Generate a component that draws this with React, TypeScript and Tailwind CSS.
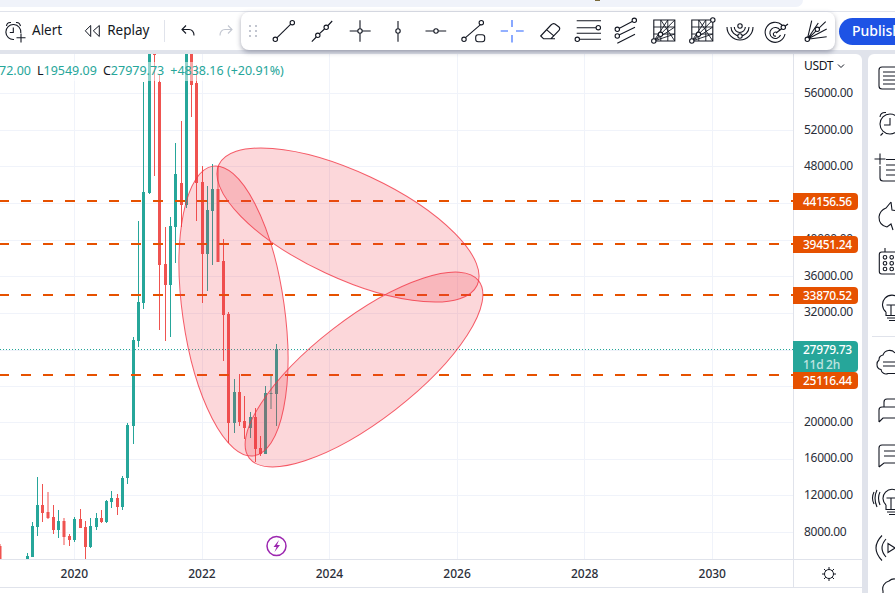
import React from "react";

type C = [number, number, number, number, number, "g" | "r"];
const candles: C[] = [
  [0, 544, 560, 546, 560, "r"],
  [27.5, 553, 560, 556, 560, "g"],
  [32.5, 522, 557, 526, 557, "g"],
  [37.5, 477, 536, 505, 527, "g"],
  [42.5, 484, 522, 505, 513, "r"],
  [48, 492, 519, 512, 518, "r"],
  [53.5, 505, 534, 517, 530, "r"],
  [58.5, 510, 538, 521, 530, "g"],
  [64, 518, 545, 521, 537, "r"],
  [69.5, 534, 546, 536, 540, "r"],
  [74.5, 517, 542, 519, 540, "g"],
  [80.5, 509, 528, 519, 528, "r"],
  [85.5, 521, 559, 527, 547, "r"],
  [90.5, 518, 548, 526, 547, "g"],
  [96.5, 513, 530, 518, 527, "g"],
  [101.5, 510, 523, 518, 522, "r"],
  [106.5, 500, 523, 501, 522, "g"],
  [111.5, 491, 508, 498, 502, "g"],
  [117.5, 494, 515, 498, 507, "r"],
  [122.5, 476, 510, 478, 507, "g"],
  [127.5, 423, 484, 425, 478, "g"],
  [133.5, 337, 444, 340, 426, "g"],
  [138.5, 221, 347, 302, 341, "g"],
  [143.5, 82, 309, 192, 303, "g"],
  [149.5, 54, 194, 54, 193, "g"],
  [154.5, 54, 176, 54, 55, "r"],
  [159.5, 74, 330, 82, 265, "r"],
  [165.5, 227, 341, 264, 285, "r"],
  [170.5, 217, 337, 226, 285, "g"],
  [175.5, 143, 263, 174, 227, "g"],
  [181.5, 121, 227, 183, 205, "r"],
  [186.5, 54, 208, 54, 205, "g"],
  [191.5, 54, 117, 54, 85, "r"],
  [196.5, 65, 221, 83, 183, "r"],
  [202.5, 166, 303, 182, 254, "r"],
  [207.5, 186, 291, 210, 254, "g"],
  [212.5, 164, 265, 189, 211, "g"],
  [218, 166, 262, 189, 262, "r"],
  [223.5, 239, 361, 261, 315, "r"],
  [228.5, 312, 443, 314, 423, "r"],
  [234.5, 379, 433, 392, 423, "g"],
  [239.5, 374, 426, 392, 422, "r"],
  [244.5, 396, 439, 421, 428, "r"],
  [250.5, 412, 438, 417, 428, "g"],
  [255.5, 408, 462, 417, 449, "r"],
  [260.5, 436, 456, 448, 454, "r"],
  [265.5, 386, 454, 393, 454, "g"],
  [271, 374, 409, 393, 394, "g"],
  [276.5, 344, 426, 349, 394, "g"],
];

const GREEN = "#26a69a";
const RED = "#ef5350";
const ORANGE = "#e65100";
const prices = ["56000.00", "52000.00", "48000.00", "44000.00", "40000.00", "36000.00", "32000.00", "28000.00", "24000.00", "20000.00", "16000.00", "12000.00", "8000.00"];
const gridY = [93, 130, 166, 203, 240, 276, 313, 350, 386, 422, 459, 495, 532];
const gridX = [74.5, 202.5, 329.5, 457.5, 584.5, 712.5];
const years = ["2020", "2022", "2024", "2026", "2028", "2030"];
const orangeBadges: [string, string][] = [
  ["44156.56", "top-[139px]"],
  ["39451.24", "top-[182px]"],
  ["33870.52", "top-[233px]"],
];

function Ic({ children }: { children: React.ReactNode }) {
  return (
    <div className="w-[38px] h-[28px] flex justify-center shrink-0">
      <svg width={28} height={28} viewBox="0 0 28 28" fill="none" stroke="#131722" strokeWidth={1.1} className="overflow-visible">
        {children}
      </svg>
    </div>
  );
}
const Dot = ({ x, y }: { x: number; y: number }) => <circle cx={x} cy={y} r={2.2} fill="white" stroke="#131722" />;

function Mesh({ knob }: { knob?: boolean }) {
  return (
    <Ic>
      <path d="M3.800 3h21v21h-21z" />
      <path d="M3.800 10h21M3.800 17h21M10.800 3v21M17.800 3v21M3.800 24L24.800 3M3.800 24L17.800 3M3.800 24L24.800 10M3.800 24L24.800 17M10.800 3L24.800 24" strokeWidth={0.9} />
      <Dot x={3.8} y={24} />
      <Dot x={10.5} y={17.3} />
      {knob && <Dot x={24.8} y={3} />}
    </Ic>
  );
}

function Toolbar() {
  return (
    <div className="flex items-center w-[594px] h-[38px] shrink-0 bg-white rounded-lg shadow-[0_2px_5px_rgba(60,64,90,0.45)] pl-[6px] relative z-20">
      <svg width={14} height={14} className="shrink-0 mr-[4px]" fill="#c2c6d0">
        <rect x="2" y="1" width="2" height="2" /><rect x="8" y="1" width="2" height="2" />
        <rect x="2" y="6" width="2" height="2" /><rect x="8" y="6" width="2" height="2" />
        <rect x="2" y="11" width="2" height="2" /><rect x="8" y="11" width="2" height="2" />
      </svg>
      <Ic><path d="M6.800 20.800L20.800 7.200" /><Dot x={5.3} y={22.3} /><Dot x={22.3} y={5.7} /></Ic>
      <Ic><path d="M3.800 24.700L8.300 20M11.500 16.700L16.500 12M20 8.500L24.200 4" /><Dot x={9.8} y={18.3} /><Dot x={18.2} y={10.3} /></Ic>
      <Ic><path d="M3.700 14H11.800M16.200 14H24.700M14 3.300V11.800M14 16.200V24.700" /><Dot x={14} y={14} /></Ic>
      <Ic><path d="M14 4V11.800M14 16.200V24.700" /><Dot x={14} y={14} /></Ic>
      <Ic><path d="M3.500 14H11.800M16.200 14H24.200" /><Dot x={14} y={14} /></Ic>
      <Ic><path d="M5.500 20.700L20.800 7.300" /><Dot x={4} y={22.3} /><Dot x={21.3} y={5.7} /><rect x="15.700" y="17.700" width="9" height="7" rx="2.500" /></Ic>
      <Ic><path d="M14 3V10M14 18V25.500M2.700 14H10M18 14H25.700" stroke="#2962ff" /></Ic>
      <Ic>
        <path d="M4.700 19L15 8q2-2 4-1l4 3q1.500 1.500 0 3.500L15 21.700H7.500zM10.500 12.700l7 6M7.500 21.700H19" />
      </Ic>
      <Ic>
        <path d="M2.700 3.700H27M2.700 10.700H22M2.700 16.300H27M5.500 22.300H27" />
        <Dot x={24.3} y={10.7} /><Dot x={3.3} y={22.3} />
      </Ic>
      <Ic>
        <path d="M7 11.400L20.200 4.400M7 18L23 10.300M5.300 26.300L23 17.300" />
        <Dot x={5.3} y={12.3} /><Dot x={22.3} y={3.3} /><Dot x={5.3} y={19} />
      </Ic>
      <Mesh />
      <Mesh knob />
      <Ic>
        <path d="M1 10A13 13 0 0 0 27 10M5 10A9 9 0 0 0 23 10M8.300 10A5.500 5.500 0 0 0 19.300 10" />
        <Dot x={14} y={9} /><Dot x={14} y={19} />
      </Ic>
      <Ic>
        <path d="M18 8A10 10 0 1 0 21 17M16 13A5.500 5.500 0 1 0 16.500 18M13 16A2 2 0 1 0 12 19" />
        <path d="M12 16L24 7" /><Dot x={19.3} y={10.3} />
      </Ic>
      <Ic>
        <path d="M5.300 22.300L9.700 3.700M5.300 22.300L16.300 6M5.300 22.300L23.700 4.700M5.300 22.300L24.700 12M5.300 22.300L24.700 19.700" />
        <Dot x={5.3} y={22.3} /><Dot x={15.3} y={12.3} />
      </Ic>
    </div>
  );
}

function Side({ children }: { children: React.ReactNode }) {
  return (
    <svg width={27} height={46} viewBox="0 0 27 46" fill="none" stroke="#131722" strokeWidth={1.1} className="shrink-0 block">
      {children}
    </svg>
  );
}

function Sidebar() {
  return (
    <div className="w-[27px] bg-white rounded-tl-md flex flex-col overflow-hidden pt-px shrink-0">
      <Side><path d="M30 12H14a3 3 0 0 0-3 3v16a3 3 0 0 0 3 3H30M15 17H30M15 21H30M15 25H30M15 29H30" /></Side>
      <Side>
        <circle cx="22" cy="23" r="10" />
        <path d="M22 17V24H16M12 16Q12.500 11 18 11.500M15 32l-2.500 2.500" />
      </Side>
      <Side><path d="M12 19V31a3 3 0 0 0 3 3H30M18 12.500H30M18 18H30M18 23H30M18 28H30M12 6.500V17.500M6.500 12H17.500" /></Side>
      <Side><path d="M23 9L18 15A11 11 0 0 0 11 24C11 29 14 33 19 34L23 31L25 37M23 9L24 17L30 18" /></Side>
      <Side>
        <rect x="11.300" y="13" width="24" height="22" rx="2.500" />
        <path d="M17 9V13" />
        <circle cx="17" cy="18.300" r="1.800" /><circle cx="23.700" cy="18.300" r="1.800" />
        <circle cx="17" cy="24.300" r="1.800" /><circle cx="23.700" cy="24.300" r="1.800" />
        <circle cx="17" cy="30" r="1.800" /><circle cx="23.700" cy="30" r="1.800" />
      </Side>
      <Side>
        <path d="M18 27A9.500 9.500 0 1 1 30 27M18 27v3.500H30M19 33H30M21 35.500H30M23 20V30.500M18.500 20H28" />
      </Side>
      <div className="h-px w-full bg-[#e0e3eb] mt-[5px] ml-[4px] shrink-0" />
      <div className="mt-[4px]">
        <Side>
          <path d="M27 12a7 7 0 0 0-12 2 5 5 0 0 0-4 5 5.500 5.500 0 0 0-2 4.500 5 5 0 0 0 4 5 5 5 0 0 0 7 4H30M15 21H30M15 25H30" />
        </Side>
        <Side><path d="M16 20V15a3 3 0 0 1 3-3H30M11 35V23a3 3 0 0 1 3-3H30M11 35l4-4H30" /></Side>
        <Side><path d="M11 34V15a3 3 0 0 1 3-3H30M11 34l5-4H30M16 18H30M16 23H28" /></Side>
        <Side>
          <path d="M18 26A9 9 0 1 1 30 26M18 26v4.500H30M19 33H30M21 35.500H30M23 19V30.500M18.500 19H28" />
          <path d="M12 13Q9 19 12 26M9 11Q5 19 9 28M6 13Q3 19 6 25" />
        </Side>
        <Side>
          <path d="M14 10.500Q2 23 14 35.500M18 14Q10 23 18 32M20 18.500V27.500L27 23Z" />
        </Side>
        <Side><path d="M15 40V20a8 8 0 0 1 6-10 8 8 0 0 1 9-1" /></Side>
      </div>
    </div>
  );
}

export default function App() {
  return (
    <div className="w-[895px] h-[593px] overflow-hidden bg-[#e0e3eb] flex flex-col [font-family:'Noto_Sans',sans-serif] text-[#131722]">
      {/* browser strip */}
      <div className="h-[12px] bg-white shrink-0 flex flex-col relative">
        <div className="h-[7px] w-[803px] bg-[#f0f3fa] rounded-br-lg" />
        <div className="absolute left-[595px] top-0 w-[5px] h-px bg-[#7a6a3a]" />
        <div className="flex-1" />
        <div className="h-px bg-[#e0e3eb]" />
      </div>

      {/* top toolbar */}
      <div className="h-[38px] shrink-0 bg-white flex items-center relative">
        <div className="flex items-center h-full w-[241px] shrink-0">
          <svg width={22} height={22} viewBox="0 0 22 22" fill="none" stroke="#131722" strokeWidth={1.1} className="ml-[5px] shrink-0 overflow-visible">
            <path d="M15.800 13A7.500 7.500 0 1 0 9 19.500M8.300 7.500v5H4.800M1.500 6Q2 2 6 2.500M11 2.500Q14.500 2 15.500 6" />
            <path d="M16 13.500v9M11.500 17.700h9" />
          </svg>
          <span className="text-[13.5px] ml-[5px] leading-none">Alert</span>
          <svg width={18} height={16} viewBox="0 0 18 16" fill="none" stroke="#131722" strokeWidth={1} className="ml-[22px] shrink-0">
            <path d="M6.700 2.500L1.300 7.800 6.700 13.500zM15.300 2.500L9.300 7.800 15.300 13.500z" />
          </svg>
          <span className="text-[13.5px] ml-[5px] leading-none">Replay</span>
          <div className="w-px h-[22px] bg-[#e0e3eb] ml-[15px]" />
          <svg width={16} height={14} viewBox="0 0 16 14" fill="none" stroke="#131722" strokeWidth={1.1} className="ml-[15px] shrink-0">
            <path d="M6 1.500L2 5.500l4 4M2 5.500h7c3 0 5 2.500 5 6" />
          </svg>
          <svg width={16} height={14} viewBox="0 0 16 14" fill="none" stroke="#c2c6d0" strokeWidth={1.1} className="ml-[22px] shrink-0">
            <path d="M10 1.500l4 4-4 4M14 5.500H7c-3 0-5 2.500-5 6" />
          </svg>
        </div>
        <Toolbar />
        <button className="ml-[4px] h-[27px] w-[56px] shrink-0 bg-[#1e53e5] text-white text-[14px] font-medium rounded-l-full pl-[13px] text-left leading-none whitespace-nowrap overflow-hidden">
          Publish
        </button>
      </div>

      <div className="h-[4px] shrink-0" />

      {/* main */}
      <div className="flex flex-1 min-h-0">
        <div className="w-[862px] bg-white rounded-tr-md shrink-0 flex flex-col">
          <div className="flex h-[505px] shrink-0">
            <div className="relative w-[793px] shrink-0 overflow-hidden">
              <svg width={793} height={505} viewBox="0 54 793 505" className="block">
                {gridY.map((y) => <path key={y} d={`M0 ${y + 0.5}H793`} stroke="#f0f3fa" />)}
                {gridX.map((x) => <path key={x} d={`M${x} 54V559`} stroke="#f0f3fa" />)}
                {candles.map(([x, wt, wb, bt, bb, c]) => (
                  <g key={x} fill={c === "g" ? GREEN : RED}>
                    <rect x={x - 0.5} y={wt} width={1} height={wb - wt} />
                    <rect x={x - 1.5} y={bt} width={3} height={Math.max(bb - bt, 1)} />
                  </g>
                ))}
                <path d="M0 349.5H793" stroke={GREEN} strokeDasharray="1 2" />
                {[201, 244, 295, 375].map((y) => (
                  <path key={y} d={`M-1 ${y}H793`} stroke={ORANGE} strokeWidth={2} strokeDasharray="10 12" />
                ))}
                <g fill="#f23645" fillOpacity={0.2} stroke="#f23645" strokeOpacity={0.8} strokeWidth={1}>
                  <ellipse cx={233.5} cy={311} rx={51} ry={146.3} transform="rotate(-8 233.5 311)" />
                  <ellipse cx={348} cy={225} rx={142.5} ry={53} transform="rotate(25 348 225)" />
                  <ellipse cx={364} cy={369.5} rx={145} ry={51} transform="rotate(-37.7 364 369.5)" />
                </g>
                <circle cx={276.5} cy={546} r={9.5} fill="white" stroke="#9c27b0" strokeWidth={1.5} />
                <path d="M279 540l-5.500 7h3l-2 5 5.500-7h-3z" fill="#9c27b0" />
              </svg>
              <div className="absolute left-0 top-[8px] w-[288px] h-[19px] bg-white/50" />
              <div className="absolute left-[-1px] top-[9px] flex text-[12.5px] leading-[16px] text-[#26a69a] whitespace-nowrap">
                <span>72.00</span>
                <span className="ml-[6px] text-[#131722]">L</span><span>19549.09</span>
                <span className="ml-[6px] text-[#131722]">C</span><span>27979.73</span>
                <span className="ml-[6px]">+4838.16 (+20.91%)</span>
              </div>
            </div>

            {/* price axis */}
            <div className="relative w-[69px] shrink-0 border-l border-[#e0e3eb] text-[12px] leading-[16px] tracking-[-0.3px] text-[#131722]">
              <div className="flex items-center pl-[10px] h-[24px]">
                USDT
                <svg width={8} height={6} viewBox="0 0 8 6" fill="none" stroke="#131722" className="ml-[4px]"><path d="M1 1.500l3 3 3-3" /></svg>
              </div>
              <div className="flex flex-col pl-[10px] pt-[7px] text-[#2a2e39]">
                {prices.map((p) => <div key={p} className="h-[36.55px]">{p}</div>)}
              </div>
              {orangeBadges.map(([v, t]) => (
                <div key={v} className={`absolute left-[-1px] w-[65px] h-[17px] bg-[#e65100] rounded-r-sm text-white font-medium leading-[17px] pl-[10px] ${t}`}>{v}</div>
              ))}
              <div className="absolute left-[-1px] top-[287px] w-[65px] h-[31px] bg-[#26a69a] rounded-r-sm text-white font-medium leading-[15px] pl-[10px] pt-px">
                27979.73<br /><span className="opacity-70">11d 2h</span>
              </div>
              <div className="absolute left-[-1px] top-[318px] w-[65px] h-[17px] bg-[#e65100] rounded-r-sm text-white font-medium leading-[17px] pl-[10px]">25116.44</div>
            </div>
          </div>

          {/* time axis */}
          <div className="flex h-[28px] shrink-0 border-t border-[#e0e3eb]">
            <div className="w-[793px] shrink-0 flex text-[12px] font-medium text-[#2a2e39] pl-[10.5px] items-center">
              {years.map((y) => <div key={y} className="w-[127.6px] text-center shrink-0">{y}</div>)}
            </div>
            <div className="flex-1 border-l border-[#e0e3eb] flex items-center justify-center pl-[1px]">
              <svg width={16} height={16} viewBox="0 0 16 16" fill="none" stroke="#131722" strokeWidth={1}>
                <circle cx="8" cy="8" r="4.500" />
                <path d="M8 1v2.500M8 12.500V15M1 8h2.500M12.500 8H15M3 3l1.800 1.800M11.200 11.200L13 13M3 13l1.800-1.800M11.200 4.800L13 3" />
              </svg>
            </div>
          </div>
          <div className="flex-1 border-t border-[#e0e3eb]" />
        </div>
        <div className="w-[6px] shrink-0" />
        <Sidebar />
      </div>
    </div>
  );
}
